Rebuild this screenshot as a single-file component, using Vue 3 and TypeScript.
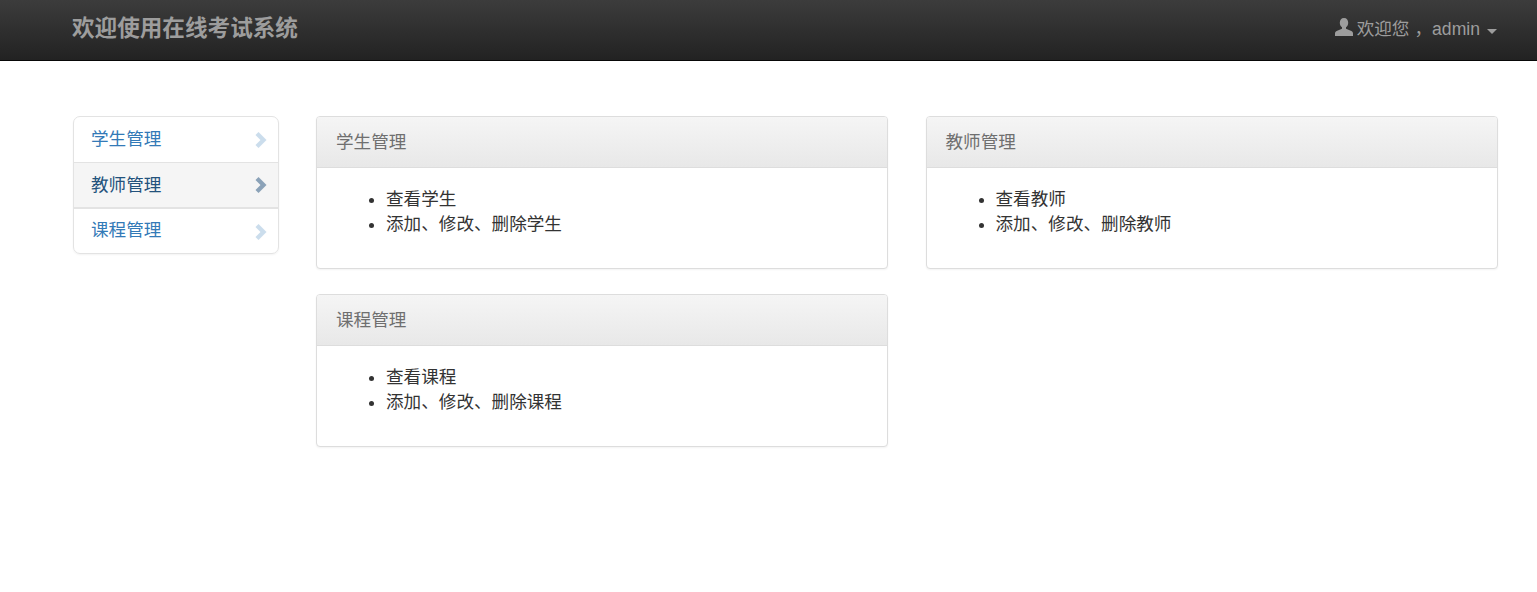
<script setup lang="ts">
const sideItems = [
  { label: '学生管理', active: false },
  { label: '教师管理', active: true },
  { label: '课程管理', active: false },
]
const leftPanels = [
  { title: '学生管理', items: ['查看学生', '添加、修改、删除学生'] },
  { title: '课程管理', items: ['查看课程', '添加、修改、删除课程'] },
]
const rightPanels = [{ title: '教师管理', items: ['查看教师', '添加、修改、删除教师'] }]
</script>

<template>
  <div class="page">
    <header class="navbar">
      <a class="brand">欢迎使用在线考试系统</a>
      <div class="user">
        <svg class="user-icon" viewBox="0 0 18 18" aria-hidden="true">
          <path d="M9 0C6.100 0 4.800 2.100 4.800 4.800c0 2 .9 3.600 2.200 4.500v1.400L1.600 13.100C.6 13.600 0 14.500 0 15.500V18h18v-2.500c0-1-.6-1.900-1.600-2.400L11 10.700V9.300c1.300-.9 2.200-2.500 2.200-4.500C13.200 2.100 11.900 0 9 0z" />
        </svg>
        <span class="user-text">欢迎您<span class="comma">，</span>admin</span>
        <span class="caret"></span>
      </div>
    </header>

    <main class="content">
      <nav class="side">
        <a v-for="item in sideItems" :key="item.label" class="side-item" :class="{ active: item.active }">
          <span>{{ item.label }}</span>
          <svg class="chevron" viewBox="0 0 12 16" aria-hidden="true">
            <path d="M3.500 0 L11.500 8 L3.500 16 L0.500 13 L5.500 8 L0.500 3 Z" />
          </svg>
        </a>
      </nav>

      <section class="col">
        <article v-for="p in leftPanels" :key="p.title" class="panel">
          <div class="panel-head">{{ p.title }}</div>
          <div class="panel-body">
            <ul>
              <li v-for="t in p.items" :key="t">{{ t }}</li>
            </ul>
          </div>
        </article>
      </section>

      <section class="col col-right">
        <article v-for="p in rightPanels" :key="p.title" class="panel">
          <div class="panel-head">{{ p.title }}</div>
          <div class="panel-body">
            <ul>
              <li v-for="t in p.items" :key="t">{{ t }}</li>
            </ul>
          </div>
        </article>
      </section>
    </main>
  </div>
</template>

<style>
html,
body {
  margin: 0;
  background: #fff;
}
</style>

<style scoped>
.page {
  min-height: 592px;
  font-family: "Liberation Sans", "Noto Sans CJK SC", sans-serif;
  font-size: 17.6px;
  line-height: 25px;
  color: #333;
}
.navbar {
  box-sizing: border-box;
  height: 61px;
  display: flex;
  align-items: center;
  justify-content: space-between;
  padding: 0 40px 4px 72px;
  background: linear-gradient(to bottom, #3c3c3c 0%, #222 100%);
  border-bottom: 1px solid #080808;
}
.brand {
  font-size: 22.6px;
  font-weight: 700;
  color: #9d9d9d;
  line-height: 25px;
}
.user {
  display: flex;
  align-items: center;
  color: #9d9d9d;
  padding-top: 3px;
}
.user-icon {
  width: 18px;
  height: 18px;
  fill: #9d9d9d;
  margin: 0 4px 6px 0;
}
.user-text {
  white-space: pre;
}
.comma {
  margin-left: 5px;
}
.caret {
  width: 0;
  height: 0;
  margin-left: 7px;
  margin-top: 3px;
  border-top: 5px solid #9d9d9d;
  border-left: 5px solid transparent;
  border-right: 5px solid transparent;
}
.content {
  display: flex;
  align-items: flex-start;
  padding: 55px 39px 0 73px;
}
.side {
  box-sizing: border-box;
  width: 206px;
  flex: none;
  margin-right: 37px;
  border: 1px solid #e3e3e3;
  border-radius: 7px;
  overflow: hidden;
  box-shadow: 0 1px 2px rgba(0, 0, 0, 0.05);
}
.side-item {
  box-sizing: border-box;
  display: flex;
  align-items: center;
  justify-content: space-between;
  height: 46px;
  padding: 0 11px 0 17px;
  color: #337ab7;
  border-bottom: 1px solid #e3e3e3;
}
.side-item:last-child {
  height: 44px;
  padding-bottom: 1px;
  border-bottom: 0;
}
.side-item:last-child .chevron {
  margin-top: 2px;
}
.side-item.active {
  color: #23527c;
  background: #f5f5f5;
  border-bottom-width: 2px;
}
.chevron {
  width: 12px;
  height: 16px;
  fill: #337ab7;
  opacity: 0.25;
}
.side-item.active .chevron {
  fill: #23527c;
  opacity: 0.5;
}
.col {
  width: 572px;
  flex: none;
  display: flex;
  flex-direction: column;
  gap: 25px;
}
.col-right {
  width: 572.5px;
  margin-left: 37.5px;
}
.panel {
  box-sizing: border-box;
  height: 153px;
  border: 1px solid #ddd;
  border-radius: 4px;
  background: #fff;
  box-shadow: 0 1px 2px rgba(0, 0, 0, 0.05);
  overflow: hidden;
}
.panel-head {
  box-sizing: border-box;
  height: 51px;
  padding: 13px 19px;
  color: #6f6f6f;
  background: linear-gradient(to bottom, #f5f5f5 0%, #e8e8e8 100%);
  border-bottom: 1px solid #ddd;
}
.panel-body {
  padding: 19px 19px;
}
ul {
  margin: 0;
  padding-left: 50px;
}
</style>
